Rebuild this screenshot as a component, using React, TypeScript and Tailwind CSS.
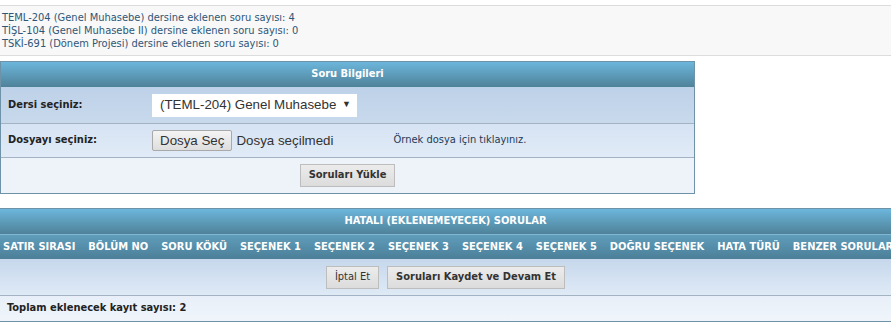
const font = "font-['DejaVu_Sans_Condensed','DejaVu_Sans',sans-serif]";

const columns = [
  "SATIR SIRASI",
  "BÖLÜM NO",
  "SORU KÖKÜ",
  "SEÇENEK 1",
  "SEÇENEK 2",
  "SEÇENEK 3",
  "SEÇENEK 4",
  "SEÇENEK 5",
  "DOĞRU SEÇENEK",
  "HATA TÜRÜ",
  "BENZER SORULAR",
];

const GrayButton = ({ children, bold = true }: { children: React.ReactNode; bold?: boolean }) => (
  <button
    className={`h-[23px] px-2 border border-[#bdbdbd] bg-gradient-to-b from-[#ececec] to-[#dcdcdc] text-[11px] text-[#333] ${bold ? "font-bold" : ""} ${font}`}
  >
    {children}
  </button>
);

export default function App() {
  return (
    <div className={`w-[891px] h-[331px] bg-white overflow-hidden ${font}`}>
      <div className="mt-[5px] h-[51px] border-t border-b border-[#dcdcdc] bg-[#f8f8f8] pl-[2px] pt-[5px] text-[11px] leading-[13px] text-[#2e5677]">
        <div>TEML-204 (Genel Muhasebe) dersine eklenen soru sayısı: 4</div>
        <div>TİŞL-104 (Genel Muhasebe II) dersine eklenen soru sayısı: 0</div>
        <div>TSKİ-691 (Dönem Projesi) dersine eklenen soru sayısı: 0</div>
      </div>

      <div className="mt-[5px] w-[695px] border border-[#6e93a8]">
        <div className="h-[25px] flex items-center justify-center bg-gradient-to-b from-[#6cb6dc] to-[#4f8299] text-white text-[11px] font-bold">
          Soru Bilgileri
        </div>
        <div className="h-[37px] flex items-center bg-gradient-to-b from-[#bdd1e8] to-[#c8d9ec] border-b border-[#a3b3c3]">
          <div className="w-[151px] pl-[7px] text-[11px] font-bold text-[#222]">Dersi seçiniz:</div>
          <div className="w-[205px] h-[23px] bg-white flex items-center pl-[8px] pr-[6px] justify-between whitespace-nowrap font-['Liberation_Sans',Arial,sans-serif] text-[13.33px] text-[#333]">
            <span>(TEML-204) Genel Muhasebe</span>
            <span className="text-[9px]">▼</span>
          </div>
        </div>
        <div className="h-[34px] flex items-center bg-gradient-to-b from-[#d6e3f3] to-[#e1ebf7] border-b border-[#a3b3c3]">
          <div className="w-[151px] pl-[7px] text-[11px] font-bold text-[#222]">Dosyayı seçiniz:</div>
          <div className="flex items-center whitespace-nowrap font-['Liberation_Sans',Arial,sans-serif] text-[13.33px] text-[#333]">
            <span className="h-[21px] px-[7px] flex items-center border border-[#a9a9a9] rounded-[2px] bg-gradient-to-b from-[#f4f4f4] to-[#dedede]">
              Dosya Seç
            </span>
            <span className="ml-[4px]">Dosya seçilmedi</span>
          </div>
          <div className="ml-[60px] text-[11px] text-[#1e3a55]">Örnek dosya için tıklayınız.</div>
        </div>
        <div className="h-[35px] flex items-center justify-center bg-[#eef3fa]">
          <GrayButton>Soruları Yükle</GrayButton>
        </div>
      </div>

      <div className="mt-[14px] w-[891px] border-t border-b border-[#6e93a8]">
        <div className="h-[25px] flex items-center justify-center bg-gradient-to-b from-[#6cb6dc] to-[#4f8299] text-white text-[11px] font-bold">
          HATALI (EKLENEMEYECEK) SORULAR
        </div>
        <div className="h-[25px] flex items-center gap-[13px] pl-[3px] whitespace-nowrap bg-gradient-to-b from-[#5f9dbb] to-[#4c7f98] border-t border-[#7fb6d2] text-white text-[11px] font-bold">
          {columns.map((c) => (
            <span key={c}>{c}</span>
          ))}
        </div>
        <div className="h-[37px] flex items-center justify-center gap-[8px] bg-gradient-to-b from-[#c6d8ec] to-[#dfeaf6] border-b border-[#a3b3c3]">
          <GrayButton bold={false}>İptal Et</GrayButton>
          <GrayButton>Soruları Kaydet ve Devam Et</GrayButton>
        </div>
        <div className="h-[25px] flex items-center pl-[7px] bg-gradient-to-b from-[#e8eff8] to-[#f0f5fb] text-[11px] font-bold text-[#222]">
          Toplam eklenecek kayıt sayısı: 2
        </div>
      </div>
    </div>
  );
}
